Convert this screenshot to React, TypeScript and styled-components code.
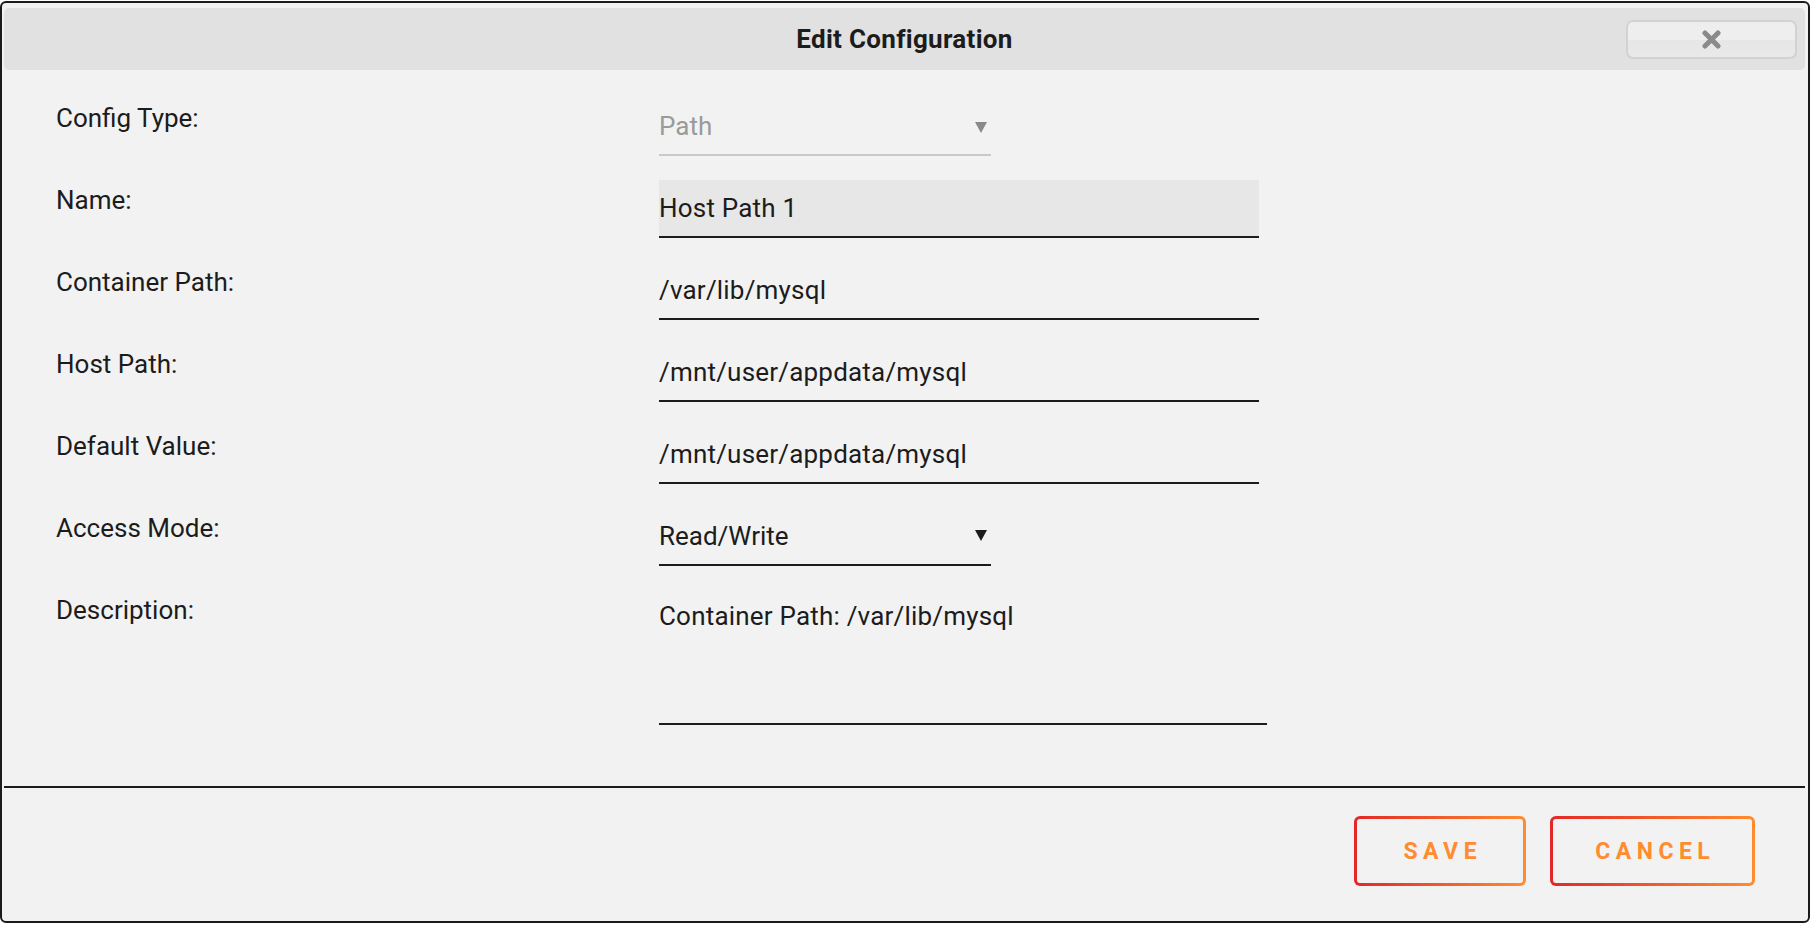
import React from 'react'
import styled, { createGlobalStyle } from 'styled-components'

const GlobalStyle = createGlobalStyle`
  html, body {
    margin: 0;
    background: #ffffff;
  }
  * {
    box-sizing: border-box;
  }
`

const FONT = `Roboto, "Open Sans", "Liberation Sans", sans-serif`

interface Field {
  label: string
  kind: 'select' | 'input' | 'textarea'
  value: string
  disabled?: boolean
  filled?: boolean
  width: number
}

const fields: Field[] = [
  { label: 'Config Type:', kind: 'select', value: 'Path', disabled: true, width: 332 },
  { label: 'Name:', kind: 'input', value: 'Host Path 1', filled: true, width: 600 },
  { label: 'Container Path:', kind: 'input', value: '/var/lib/mysql', width: 600 },
  { label: 'Host Path:', kind: 'input', value: '/mnt/user/appdata/mysql', width: 600 },
  { label: 'Default Value:', kind: 'input', value: '/mnt/user/appdata/mysql', width: 600 },
  { label: 'Access Mode:', kind: 'select', value: 'Read/Write', width: 332 },
  { label: 'Description:', kind: 'textarea', value: 'Container Path: /var/lib/mysql', width: 608 },
]

export default function App() {
  return (
    <>
      <GlobalStyle />
      <Dialog>
        <TitleBar>
          <span />
          <Title>Edit Configuration</Title>
          <CloseButton aria-label="close">
            <svg width="19" height="19" viewBox="0 0 19 19">
              <path d="M3 3 L16 16 M16 3 L3 16" stroke="#8a8a8a" strokeWidth="5" strokeLinecap="round" />
            </svg>
          </CloseButton>
        </TitleBar>

        <FormGrid>
          {fields.map((f) => (
            <React.Fragment key={f.label}>
              <Label>{f.label}</Label>
              {f.kind === 'select' && (
                <SelectBox $width={f.width} $disabled={f.disabled}>
                  <span>{f.value}</span>
                  <Arrow $disabled={f.disabled} />
                </SelectBox>
              )}
              {f.kind === 'input' && <TextInput $width={f.width} $filled={f.filled} readOnly defaultValue={f.value} />}
              {f.kind === 'textarea' && <TextArea $width={f.width} readOnly defaultValue={f.value} />}
            </React.Fragment>
          ))}
        </FormGrid>

        <Footer>
          <OutlineButton $width={172}>SAVE</OutlineButton>
          <OutlineButton $width={205}>CANCEL</OutlineButton>
        </Footer>
      </Dialog>
    </>
  )
}

const Dialog = styled.div`
  margin-top: 1px;
  width: 1810px;
  height: 922px;
  border: 2px solid #1b1b1b;
  border-radius: 6px;
  background: #f2f2f2;
  padding: 5px 3px 0 2px;
  display: flex;
  flex-direction: column;
  font-family: ${FONT};
  color: #1c1c1c;
`

const TitleBar = styled.div`
  height: 62px;
  flex-shrink: 0;
  background: #e1e1e1;
  border-radius: 5px;
  display: grid;
  grid-template-columns: 1fr auto 1fr;
  align-items: center;
`

const Title = styled.h1`
  margin: 0;
  font-size: 26px;
  font-weight: 700;
  letter-spacing: 0.3px;
  color: #1c1c1c;
`

const CloseButton = styled.button`
  justify-self: end;
  margin-right: 8px;
  width: 171px;
  height: 39px;
  border: 2px solid #d2d2d2;
  border-radius: 7px;
  background: linear-gradient(#eeeeee 0%, #eeeeee 50%, #e6e6e6 50%, #e9e9e9 100%);
  display: flex;
  align-items: center;
  justify-content: center;
  padding: 0;
  cursor: pointer;
`

const FormGrid = styled.div`
  display: grid;
  grid-template-columns: 603px 1fr;
  row-gap: 24px;
  padding: 28px 0 0 52px;
  align-items: start;
`

const Label = styled.div`
  font-size: 26px;
  line-height: 34px;
  padding-top: 3px;
  color: #1c1c1c;
`

const SelectBox = styled.div<{ $width: number; $disabled?: boolean }>`
  width: ${(p) => p.$width}px;
  height: 58px;
  display: flex;
  align-items: center;
  justify-content: space-between;
  padding-right: 4px;
  font-size: 26px;
  line-height: 34px;
  color: ${(p) => (p.$disabled ? '#9a9a9a' : '#1c1c1c')};
  border-bottom: 2px solid ${(p) => (p.$disabled ? '#c9c9c9' : '#1c1c1c')};
`

const Arrow = styled.span<{ $disabled?: boolean }>`
  width: 0;
  height: 0;
  border-left: 6px solid transparent;
  border-right: 6px solid transparent;
  border-top: 11px solid ${(p) => (p.$disabled ? '#8a8a8a' : '#1c1c1c')};
  margin-top: ${(p) => (p.$disabled ? '2px' : '-2px')};
`

const TextInput = styled.input<{ $width: number; $filled?: boolean }>`
  width: ${(p) => p.$width}px;
  height: 58px;
  padding: 0;
  border: none;
  border-bottom: 2px solid #1c1c1c;
  border-radius: 0;
  outline: none;
  background: ${(p) => (p.$filled ? '#e7e7e7' : 'transparent')};
  font-family: ${FONT};
  font-size: 26px;
  line-height: 34px;
  letter-spacing: 0.2px;
  color: #1c1c1c;
`

const TextArea = styled.textarea<{ $width: number }>`
  display: block;
  width: ${(p) => p.$width}px;
  height: 135px;
  padding: 9px 0 0 0;
  border: none;
  border-bottom: 2px solid #1c1c1c;
  border-radius: 0;
  outline: none;
  resize: none;
  background: transparent;
  font-family: ${FONT};
  font-size: 26px;
  line-height: 34px;
  letter-spacing: 0.2px;
  color: #1c1c1c;
`

const Footer = styled.div`
  margin-top: 61px;
  border-top: 2px solid #1c1c1c;
  padding: 28px 50px 0 0;
  display: flex;
  justify-content: flex-end;
  gap: 24px;
`

const OutlineButton = styled.button<{ $width: number }>`
  width: ${(p) => p.$width}px;
  height: 70px;
  border: 3px solid transparent;
  border-radius: 6px;
  background:
    linear-gradient(#f2f2f2, #f2f2f2) padding-box,
    linear-gradient(90deg, #e22828 0%, #ff8c2f 100%) border-box;
  font-family: ${FONT};
  font-size: 23px;
  font-weight: 700;
  letter-spacing: 5.5px;
  padding: 0 0 0 5.5px;
  color: #ff8c2f;
  cursor: pointer;
`
